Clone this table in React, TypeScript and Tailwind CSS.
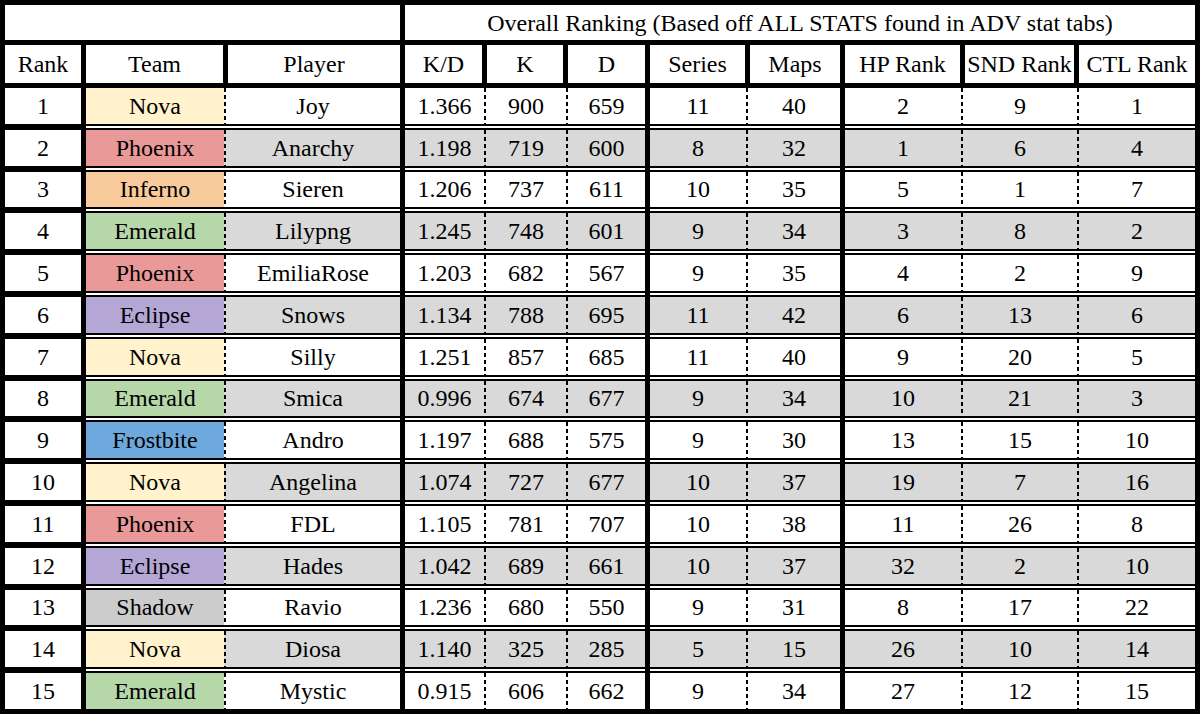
import React from "react";

type Row = {
  rank: number;
  team: string;
  player: string;
  kd: string;
  k: number;
  d: number;
  series: number;
  maps: number;
  hp: number;
  snd: number;
  ctl: number;
};

const rows: Row[] = [
  { rank: 1, team: "Nova", player: "Joy", kd: "1.366", k: 900, d: 659, series: 11, maps: 40, hp: 2, snd: 9, ctl: 1 },
  { rank: 2, team: "Phoenix", player: "Anarchy", kd: "1.198", k: 719, d: 600, series: 8, maps: 32, hp: 1, snd: 6, ctl: 4 },
  { rank: 3, team: "Inferno", player: "Sieren", kd: "1.206", k: 737, d: 611, series: 10, maps: 35, hp: 5, snd: 1, ctl: 7 },
  { rank: 4, team: "Emerald", player: "Lilypng", kd: "1.245", k: 748, d: 601, series: 9, maps: 34, hp: 3, snd: 8, ctl: 2 },
  { rank: 5, team: "Phoenix", player: "EmiliaRose", kd: "1.203", k: 682, d: 567, series: 9, maps: 35, hp: 4, snd: 2, ctl: 9 },
  { rank: 6, team: "Eclipse", player: "Snows", kd: "1.134", k: 788, d: 695, series: 11, maps: 42, hp: 6, snd: 13, ctl: 6 },
  { rank: 7, team: "Nova", player: "Silly", kd: "1.251", k: 857, d: 685, series: 11, maps: 40, hp: 9, snd: 20, ctl: 5 },
  { rank: 8, team: "Emerald", player: "Smica", kd: "0.996", k: 674, d: 677, series: 9, maps: 34, hp: 10, snd: 21, ctl: 3 },
  { rank: 9, team: "Frostbite", player: "Andro", kd: "1.197", k: 688, d: 575, series: 9, maps: 30, hp: 13, snd: 15, ctl: 10 },
  { rank: 10, team: "Nova", player: "Angelina", kd: "1.074", k: 727, d: 677, series: 10, maps: 37, hp: 19, snd: 7, ctl: 16 },
  { rank: 11, team: "Phoenix", player: "FDL", kd: "1.105", k: 781, d: 707, series: 10, maps: 38, hp: 11, snd: 26, ctl: 8 },
  { rank: 12, team: "Eclipse", player: "Hades", kd: "1.042", k: 689, d: 661, series: 10, maps: 37, hp: 32, snd: 2, ctl: 10 },
  { rank: 13, team: "Shadow", player: "Ravio", kd: "1.236", k: 680, d: 550, series: 9, maps: 31, hp: 8, snd: 17, ctl: 22 },
  { rank: 14, team: "Nova", player: "Diosa", kd: "1.140", k: 325, d: 285, series: 5, maps: 15, hp: 26, snd: 10, ctl: 14 },
  { rank: 15, team: "Emerald", player: "Mystic", kd: "0.915", k: 606, d: 662, series: 9, maps: 34, hp: 27, snd: 12, ctl: 15 },
];

const teamBg: Record<string, string> = {
  Nova: "bg-[#fff2cc]",
  Phoenix: "bg-[#ea9999]",
  Inferno: "bg-[#f9cb9c]",
  Emerald: "bg-[#b6d7a8]",
  Eclipse: "bg-[#b4a7d6]",
  Frostbite: "bg-[#6fa8dc]",
  Shadow: "bg-[#cccccc]",
};

const cell = "flex items-center justify-center shrink-0 whitespace-nowrap";

function Dash() {
  return (
    <div className="w-[2px] shrink-0 self-stretch bg-[repeating-linear-gradient(to_bottom,#000_0px,#000_4px,transparent_4px,transparent_7px)]" />
  );
}

function Thick() {
  return <div className="w-[5px] shrink-0 self-stretch bg-black" />;
}

function DataRow({ r }: { r: Row }) {
  const gray = r.rank % 2 === 0;
  const bg = gray ? "bg-[#d9d9d9]" : "bg-white";
  return (
    <div className="flex flex-1 min-h-0">
      <div className={`${cell} w-[76px] bg-white`}>{r.rank}</div>
      <Thick />
      <div className={`flex flex-1 ${bg}`}>
        <div className={`${cell} w-[138px] ${teamBg[r.team]}`}>{r.team}</div>
        <Dash />
        <div className={`${cell} w-[174px]`}>{r.player}</div>
        <Thick />
        <div className={`${cell} w-[79px]`}>{r.kd}</div>
        <Dash />
        <div className={`${cell} w-[80px]`}>{r.k}</div>
        <Dash />
        <div className={`${cell} w-[77px]`}>{r.d}</div>
        <Thick />
        <div className={`${cell} w-[96px]`}>{r.series}</div>
        <Dash />
        <div className={`${cell} w-[92px]`}>{r.maps}</div>
        <Thick />
        <div className={`${cell} w-[116px]`}>{r.hp}</div>
        <Dash />
        <div className={`${cell} w-[114px]`}>{r.snd}</div>
        <Dash />
        <div className={`${cell} w-[116px]`}>{r.ctl}</div>
      </div>
    </div>
  );
}

function Separator() {
  return (
    <div className="flex h-[6px] shrink-0 bg-black">
      <div className="w-[81px] shrink-0" />
      <div className="flex flex-1 flex-col justify-center">
        <div className="flex h-[2px]">
          <div className="w-[314px] shrink-0 bg-white" />
          <div className="w-[5px] shrink-0" />
          <div className="w-[240px] shrink-0 bg-white" />
          <div className="w-[5px] shrink-0" />
          <div className="w-[190px] shrink-0 bg-white" />
          <div className="w-[5px] shrink-0" />
          <div className="w-[350px] shrink-0 bg-white" />
        </div>
      </div>
    </div>
  );
}

export default function App() {
  const headers: [string, string][] = [
    ["Rank", "w-[76px]"],
    ["Team", "w-[137px]"],
    ["Player", "w-[172px]"],
    ["K/D", "w-[77px]"],
    ["K", "w-[76px]"],
    ["D", "w-[77px]"],
    ["Series", "w-[95px]"],
    ["Maps", "w-[90px]"],
    ["HP Rank", "w-[115px]"],
    ["SND Rank", "w-[109px]"],
    ["CTL Rank", "w-[116px]"],
  ];
  return (
    <div className="w-[1200px] h-[714px] bg-black p-[5px] flex flex-col gap-[5px] text-black text-[24px] font-['Liberation_Serif',serif] leading-none">
      <div className="flex h-[35px] shrink-0 gap-[5px]">
        <div className="w-[395px] bg-white" />
        <div className={`${cell} flex-1 bg-white`}>
          Overall Ranking (Based off ALL STATS found in ADV stat tabs)
        </div>
      </div>
      <div className="flex h-[38px] shrink-0 gap-[5px]">
        {headers.map(([h, w]) => (
          <div key={h} className={`${cell} ${w} bg-white`}>
            {h}
          </div>
        ))}
      </div>
      <div className="flex flex-1 flex-col min-h-0">
        {rows.map((r, i) => (
          <React.Fragment key={r.rank}>
            {i > 0 && <Separator />}
            <DataRow r={r} />
          </React.Fragment>
        ))}
      </div>
    </div>
  );
}
